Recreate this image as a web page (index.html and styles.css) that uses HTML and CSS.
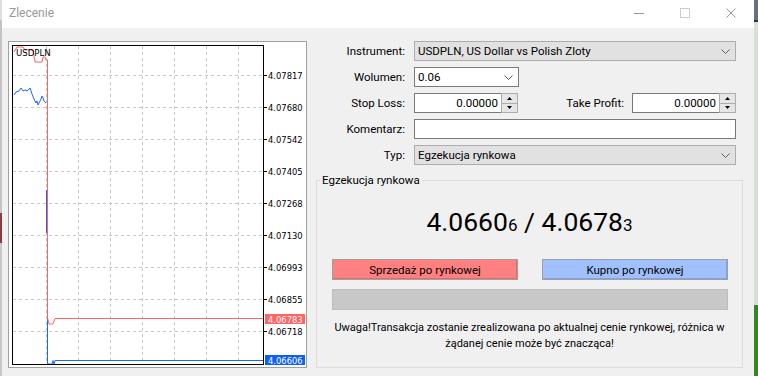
FILE: index.html
```html
<!DOCTYPE html>
<html>
<head>
	<meta charset="UTF-8">
	<meta name="viewport" content="width=device-width, initial-scale=1">

	<title>Zlecenie</title>

	<link rel="stylesheet" href="styles.css">
</head>
<body>

	<div class="window">

		<!-- Title bar -->
		<div class="titlebar">
			<span class="title">Zlecenie</span>
			<div class="caption">
				<span class="cap-btn"><svg width="10" height="10"><line x1="0" y1="5.5" x2="10" y2="5.5" stroke="#999"/></svg></span>
				<span class="cap-btn"><svg width="10" height="10"><rect x="0.5" y="0.5" width="9" height="9" fill="none" stroke="#ccc"/></svg></span>
				<span class="cap-btn"><svg width="10" height="10"><path d="M0.5 0.5 L9.5 9.5 M9.5 0.5 L0.5 9.5" stroke="#999"/></svg></span>
			</div>
		</div>

		<div class="client">

			<!-- Tick chart -->
			<div class="chart">
				<svg width="297" height="325">
					<g stroke="#c8c8c8" stroke-dasharray="3 3">
						<line x1="37.5" y1="4" x2="37.5" y2="322"/>
						<line x1="69.5" y1="4" x2="69.5" y2="322"/>
						<line x1="101.5" y1="4" x2="101.5" y2="322"/>
						<line x1="133.5" y1="4" x2="133.5" y2="322"/>
						<line x1="165.5" y1="4" x2="165.5" y2="322"/>
						<line x1="197.5" y1="4" x2="197.5" y2="322"/>
						<line x1="229.5" y1="4" x2="229.5" y2="322"/>
						<line x1="4" y1="33.5" x2="254" y2="33.5"/>
						<line x1="4" y1="65.5" x2="254" y2="65.5"/>
						<line x1="4" y1="97.5" x2="254" y2="97.5"/>
						<line x1="4" y1="129.5" x2="254" y2="129.5"/>
						<line x1="4" y1="161.5" x2="254" y2="161.5"/>
						<line x1="4" y1="193.5" x2="254" y2="193.5"/>
						<line x1="4" y1="225.5" x2="254" y2="225.5"/>
						<line x1="4" y1="257.5" x2="254" y2="257.5"/>
						<line x1="4" y1="289.5" x2="254" y2="289.5"/>
					</g>
					<g stroke="#000">
						<line x1="254" y1="33.5" x2="258" y2="33.5"/>
						<line x1="254" y1="65.5" x2="258" y2="65.5"/>
						<line x1="254" y1="97.5" x2="258" y2="97.5"/>
						<line x1="254" y1="129.5" x2="258" y2="129.5"/>
						<line x1="254" y1="161.5" x2="258" y2="161.5"/>
						<line x1="254" y1="193.5" x2="258" y2="193.5"/>
						<line x1="254" y1="225.5" x2="258" y2="225.5"/>
						<line x1="254" y1="257.5" x2="258" y2="257.5"/>
						<line x1="254" y1="289.5" x2="258" y2="289.5"/>
					</g>
					<g class="axis">
						<text x="259" y="37">4.07817</text>
						<text x="259" y="69">4.07680</text>
						<text x="259" y="101">4.07542</text>
						<text x="259" y="133">4.07405</text>
						<text x="259" y="165">4.07268</text>
						<text x="259" y="197">4.07130</text>
						<text x="259" y="229">4.06993</text>
						<text x="259" y="261">4.06855</text>
						<text x="259" y="293">4.06718</text>
					</g>

					<!-- bid -->
					<polyline fill="none" stroke="#1a66ff" points="5,53 7,50 10,49 12,46 14,49 16,48 18,49 20,47 21,46 23,52 25,57 27,61 28,59 29,63 31,59 32,57 33,54 34,56 35,59 37,61"/>
					<rect x="37" y="148" width="2" height="43" fill="#1a66ff"/>
					<polyline fill="none" stroke="#1a66ff" points="38.5,274 38.5,322 43,322 44,318.5 45,322 46,318.5 254,318.5"/>
					<!-- ask -->
					<polyline fill="none" stroke="#ff6262" points="5,10 8,5 14,5 16,8 24,8 26,20 33,20 34,15 36,15 37,18 38.5,18 38.5,276 40,282 44,282 46,276.5 254,276.5"/>

					<rect x="3.5" y="3.5" width="251" height="319" fill="none" stroke="#000"/>

					<rect x="256" y="272" width="40" height="10" fill="#ff6464"/>
					<text class="tag" x="259" y="280.5">4.06783</text>
					<rect x="256" y="313" width="40" height="10" fill="#0f5ff5"/>
					<text class="tag" x="259" y="321.5">4.06606</text>

					<text class="symbol" x="7" y="13.5">USDPLN</text>
				</svg>
			</div>

			<!-- Order form -->
			<div class="order">
				<div class="form">
					<label>Instrument:</label>
					<div class="select">
						<span>USDPLN, US Dollar vs Polish Zloty</span>
						<svg width="9" height="5"><polyline points="0.5,0.5 4.5,4.5 8.5,0.5" fill="none" stroke="#606060"/></svg>
					</div>

					<label>Wolumen:</label>
					<div class="select edit volume">
						<span>0.06</span>
						<svg width="9" height="5"><polyline points="0.5,0.5 4.5,4.5 8.5,0.5" fill="none" stroke="#606060"/></svg>
					</div>

					<label>Stop Loss:</label>
					<div class="pair">
						<div class="spin">
							<span class="field">0.00000</span>
							<span class="arrows">
								<span><svg width="5" height="3"><polygon points="2.5,0 5,3 0,3" fill="#000"/></svg></span>
								<span><svg width="5" height="3"><polygon points="0,0 5,0 2.5,3" fill="#000"/></svg></span>
							</span>
						</div>
						<label class="inline">Take Profit:</label>
						<div class="spin">
							<span class="field">0.00000</span>
							<span class="arrows">
								<span><svg width="5" height="3"><polygon points="2.5,0 5,3 0,3" fill="#000"/></svg></span>
								<span><svg width="5" height="3"><polygon points="0,0 5,0 2.5,3" fill="#000"/></svg></span>
							</span>
						</div>
					</div>

					<label>Komentarz:</label>
					<div class="text-input"></div>

					<label>Typ:</label>
					<div class="select">
						<span>Egzekucja rynkowa</span>
						<svg width="9" height="5"><polyline points="0.5,0.5 4.5,4.5 8.5,0.5" fill="none" stroke="#606060"/></svg>
					</div>
				</div>

				<fieldset class="group">
					<legend>Egzekucja rynkowa</legend>
					<div class="quote">4.0660<small>6</small> / 4.0678<small>3</small></div>
					<div class="actions">
						<button class="sell">Sprzedaż po rynkowej</button>
						<button class="buy">Kupno po rynkowej</button>
					</div>
					<div class="progress"></div>
					<p class="note">Uwaga!Transakcja zostanie zrealizowana po aktualnej cenie rynkowej, różnica w żądanej cenie może być znacząca!</p>
				</fieldset>
			</div>

		</div>
	</div>

</body>
</html>
```

FILE: styles.css
```css
body {
	margin: 0;
	padding: 0;
	height: 376px;
	overflow: hidden;
	font-family: 'Roboto', 'Liberation Sans', sans-serif;
	font-size: 11.5px;
	color: #000;
	/* bits of the desktop peeking out on both sides */
	background:
		linear-gradient(to bottom, #dedede 0, #dedede 20px, #c4c4c4 20px, #c4c4c4 213px, #8c3c3c 213px, #8c3c3c 243px, #c8c8c8 243px) left top / 2px 100% no-repeat,
		linear-gradient(to bottom, #66707e 0, #66707e 20px, #2e3440 20px, #2e3440 22px, #d9dfd6 22px, #d9dfd6 305px, #2f8a1e 305px) right top / 4px 100% no-repeat,
		#d9dfd6;
}

.window {
	width: 752px;
	margin-left: 2px;
	height: 376px;
	background: #f0f0f0;
}

/* TITLE BAR */
.titlebar {
	display: flex;
	align-items: center;
	justify-content: space-between;
	height: 25px;
	padding-bottom: 3px;
	background: #fff;
}
.title {
	padding-left: 7px;
	font-size: 12px;
	color: #999;
}
.caption {
	display: flex;
}
.cap-btn {
	display: flex;
	align-items: center;
	justify-content: center;
	width: 46px;
	height: 25px;
}

/* CLIENT */
.client {
	display: flex;
	padding: 13px 11px 0 6px;
}

.chart {
	width: 299px;
	height: 327px;
	box-sizing: border-box;
	border: 1px solid #a0a0a0;
	background: #fff;
}
.chart svg {
	display: block;
}
.chart text {
	font-family: 'DejaVu Sans', sans-serif;
	font-size: 8.4px;
	fill: #000;
}
.chart text.tag {
	fill: #fff;
}
.chart text.symbol {
	font-size: 8.6px;
}

.order {
	flex: 1;
	margin-left: 9px;
}

/* FORM */
.form {
	display: grid;
	grid-template-columns: 89px 1fr;
	grid-auto-rows: 20px;
	column-gap: 9px;
	row-gap: 6px;
	margin-right: 7px;
}
.form label {
	align-self: center;
	text-align: right;
	white-space: nowrap;
}
.select {
	display: flex;
	align-items: center;
	justify-content: space-between;
	box-sizing: border-box;
	height: 20px;
	padding: 0 5px 0 3px;
	border: 1px solid #adadad;
	background: #e1e1e1;
}
.select.edit {
	background: #fff;
	border-color: #7a7a7a;
}
.select.volume {
	width: 105px;
}
.text-input {
	box-sizing: border-box;
	height: 20px;
	border: 1px solid #7a7a7a;
	background: #fff;
}
.pair {
	display: flex;
	align-items: center;
}
.pair label.inline {
	flex: 1;
	padding-right: 8px;
}
.spin {
	display: flex;
	width: 104px;
	height: 20px;
}
.spin .field {
	flex: 1;
	box-sizing: border-box;
	border: 1px solid #7a7a7a;
	border-right: none;
	background: #fff;
	text-align: right;
	padding-right: 3px;
	line-height: 18px;
}
.spin .arrows {
	display: flex;
	flex-direction: column;
	width: 17px;
	box-sizing: border-box;
	border: 1px solid #adadad;
	background: #e6e6e6;
}
.spin .arrows span {
	flex: 1;
	display: flex;
	align-items: center;
	justify-content: center;
}
.spin .arrows span + span {
	border-top: 1px solid #adadad;
}
.spin .arrows svg {
	display: block;
}

/* MARKET EXECUTION GROUP */
.group {
	margin: 7px 0 0;
	padding: 0;
	height: 196px;
	box-sizing: border-box;
	border: 1px solid #dcdcdc;
	min-width: 0;
}
.group legend {
	margin-left: 3px;
	padding: 0 2px;
	line-height: 16px;
}
.quote {
	margin-top: 17px;
	line-height: 34px;
	font-size: 26.5px;
	text-align: center;
}
.quote small {
	font-size: 17px;
}
.actions {
	display: flex;
	justify-content: space-between;
	margin-top: 17px;
	padding: 0 14px 0 15px;
}
.actions button {
	width: 186px;
	height: 21px;
	padding: 0;
	border: 1px solid #a0a0a0;
	font-family: inherit;
	font-size: 11.5px;
	color: #000;
}
.actions .sell {
	background: #ff8080;
	box-shadow: inset -1px -1px 0 #e26a6a;
}
.actions .buy {
	background: #a0c0ff;
	box-shadow: inset -1px -1px 0 #7f9fe6;
}
.progress {
	margin: 9px 14px 0 15px;
	height: 21px;
	box-sizing: border-box;
	border: 1px solid #bdbdbd;
	background: #c8c8c8;
}
.note {
	margin: 10px 0 0;
	padding: 0 10px;
	font-size: 11px;
	line-height: 16px;
	text-align: center;
}
```
